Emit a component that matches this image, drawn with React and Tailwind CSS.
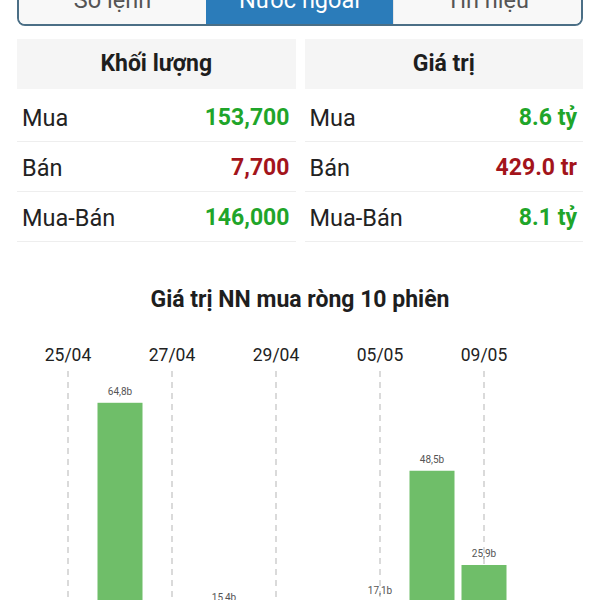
const tabs = ['Sổ lệnh', 'Nước ngoài', 'Tín hiệu'];

const volume = [
  { label: 'Mua', value: '153,700', tone: 'up' },
  { label: 'Bán', value: '7,700', tone: 'down' },
  { label: 'Mua-Bán', value: '146,000', tone: 'up' },
];

const amount = [
  { label: 'Mua', value: '8.6 tỷ', tone: 'up' },
  { label: 'Bán', value: '429.0 tr', tone: 'down' },
  { label: 'Mua-Bán', value: '8.1 tỷ', tone: 'up' },
];

// net foreign buy value, 10 sessions (billion)
const sessions = [
  { date: '25/04', v: -21.3 },
  { date: '26/04', v: 64.8 },
  { date: '27/04', v: -8.2 },
  { date: '28/04', v: 15.4 },
  { date: '29/04', v: -3.6 },
  { date: '04/05', v: -11.9 },
  { date: '05/05', v: 17.1 },
  { date: '06/05', v: 48.5 },
  { date: '09/05', v: 25.9 },
  { date: '10/05', v: -6.4 },
];

function StatCard({ title, rows }) {
  return (
    <div className="flex-1">
      <div className="h-[50px] bg-[#f5f5f5] flex items-center justify-center text-[23px] font-bold text-[#1e1e1e]">
        {title}
      </div>
      <div className="mt-[3px]">
        {rows.map((r) => (
          <div
            key={r.label}
            className="h-[50px] pt-[4px] border-b border-[#eeeeee] flex items-center justify-between pl-[5px] pr-[6px]"
          >
            <span className="text-[23.5px] text-[#222]">{r.label}</span>
            <span
              className={
                'text-[23px] font-bold ' + (r.tone === 'up' ? 'text-[#1fa52a]' : 'text-[#a3141b]')
              }
            >
              {r.value}
            </span>
          </div>
        ))}
      </div>
    </div>
  );
}

function NetChart() {
  const step = 52;
  const x0 = 68;
  const base = 344;
  const k = 4.17;
  return (
    <svg width="600" height="400" className="block" style={{ fontFamily: 'Roboto, sans-serif' }}>
      {sessions.map((s, i) =>
        i % 2 === 0 ? (
          <g key={'g' + i}>
            <text x={x0 + i * step} y="32" textAnchor="middle" fontSize="17.5" fill="#222">
              {s.date}
            </text>
            <line
              x1={x0 + i * step}
              x2={x0 + i * step}
              y1="42"
              y2="400"
              stroke="#b5b5b5"
              strokeWidth="1"
              strokeDasharray="6 5"
            />
          </g>
        ) : null
      )}
      {sessions.map((s, i) => {
        const cx = x0 + i * step;
        const h = Math.abs(s.v) * k;
        const y = s.v >= 0 ? base - h : base;
        return (
          <g key={'b' + i}>
            <rect x={cx - 22.5} y={y} width="45" height={h} fill={s.v >= 0 ? '#6fbe69' : '#e06666'} />
            {s.v >= 0 && (
              <text x={cx} y={y - 8} textAnchor="middle" fontSize="10" fill="#555">
                {s.v.toFixed(1).replace('.', ',')}b
              </text>
            )}
          </g>
        );
      })}
    </svg>
  );
}

export default function App() {
  return (
    <div className="w-[600px] h-[600px] overflow-hidden bg-white font-['Roboto',sans-serif]">
      {/* tabs */}
      <div className="mx-[17px] w-[566px] -mt-[24px] h-[50px] flex border-2 border-[#4b6f86] rounded-lg overflow-hidden">
        {tabs.map((t, i) => (
          <div
            key={t}
            className={
              'flex-1 flex items-center justify-center text-[23.5px] ' +
              (i === 1 ? 'bg-[#2b7cba] text-white' : 'bg-[#f8f8f8] text-[#555]') +
              (i === 2 ? ' border-l border-[#e5e5e5]' : '')
            }
          >
            {t}
          </div>
        ))}
      </div>

      <div className="mt-[13px] mx-[17px] flex gap-[9px]">
        <StatCard title="Khối lượng" rows={volume} />
        <StatCard title="Giá trị" rows={amount} />
      </div>

      <h3 className="mt-[44px] text-center text-[23px] font-bold text-[#1e1e1e] leading-7">
        Giá trị NN mua ròng 10 phiên
      </h3>

      <div className="mt-[15px]">
        <NetChart />
      </div>
    </div>
  );
}
